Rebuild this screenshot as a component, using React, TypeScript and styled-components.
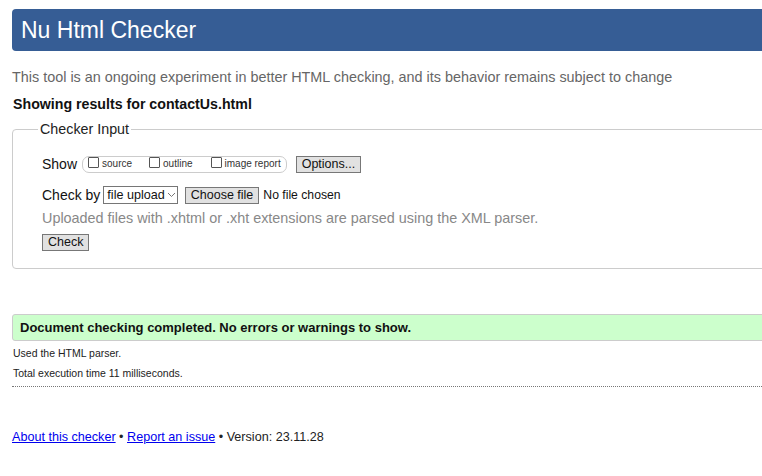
import styled, { createGlobalStyle } from "styled-components";

const GlobalStyle = createGlobalStyle`
  html, body {
    margin: 0;
    padding: 0;
    background: #fff;
    overflow: hidden;
  }
  body {
    font-family: "Liberation Sans", Arial, sans-serif;
    color: #111;
  }
`;

const Page = styled.div`
  width: 820px;
  padding: 9px 0 0 12px;
`;

const Header = styled.h1`
  margin: 0;
  height: 42px;
  background: #365d95;
  border-radius: 4px;
  color: #fff;
  font-size: 23px;
  font-weight: normal;
  line-height: 42px;
  padding-left: 9px;
`;

const Tagline = styled.p`
  margin: 17px 0 0;
  font-size: 14.4px;
  line-height: 18px;
  color: #666;
`;

const ResultsFor = styled.p`
  margin: 9px 0 0 1px;
  font-size: 14.2px;
  font-weight: bold;
  line-height: 18px;
`;

const Fieldset = styled.fieldset`
  margin: 8px 0 0;
  padding: 0 0 17px;
  border: 1px solid #ccc;
  border-radius: 4px;
  min-width: 0;
`;

const Legend = styled.legend`
  margin-left: 25px;
  padding: 0 2px;
  font-size: 14.3px;
  color: #222;
`;

const Inner = styled.div`
  padding: 9px 0 0 29px;
`;

const Row = styled.div<{ $top?: number }>`
  display: flex;
  align-items: center;
  margin-top: ${(p) => p.$top ?? 0}px;
  font-size: 14px;
  line-height: 18px;
`;

const Label = styled.span`
  margin-right: 3px;
`;

const ShowGroup = styled.span`
  display: inline-flex;
  align-items: center;
  height: 15px;
  border: 1px solid #ccc;
  border-radius: 7px;
  padding: 0 5px;
  margin-left: 2px;
`;

const CheckItem = styled.span<{ $gap?: number }>`
  display: inline-flex;
  align-items: center;
  margin-right: ${(p) => p.$gap ?? 0}px;
  font-size: 10px;
  color: #333;
`;

const Box = styled.span`
  box-sizing: border-box;
  display: inline-block;
  width: 11px;
  height: 11px;
  border: 1px solid #555;
  border-radius: 1px;
  margin-right: 3px;
  margin-top: -3px;
  background: #fff;
`;

const Button = styled.span<{ $ml?: number }>`
  display: inline-block;
  margin-left: ${(p) => p.$ml ?? 0}px;
  padding: 0 5px;
  height: 15px;
  line-height: 15px;
  font-size: 12.5px;
  color: #111;
  background: #e1e1e1;
  border: 1px solid #777;
`;

const Select = styled.span`
  display: inline-flex;
  align-items: center;
  height: 16px;
  padding: 0 1px 0 3px;
  border: 1px solid #767676;
  font-size: 12.6px;
  background: #fff;
`;

const Chevron = styled.svg`
  margin-left: 2px;
`;

const NoFile = styled.span`
  margin-left: 4px;
  font-size: 12.2px;
`;

const Hint = styled.p`
  margin: 5px 0 0;
  font-size: 14.4px;
  line-height: 18px;
  color: #888;
`;

const Success = styled.div`
  margin-top: 45px;
  height: 25px;
  line-height: 25px;
  background: #ccffcc;
  border: 1px solid #ccc;
  border-radius: 3px;
  padding-left: 7px;
  font-size: 13px;
  font-weight: bold;
`;

const Note = styled.p<{ $top: number }>`
  margin: ${(p) => p.$top}px 0 0 1px;
  font-size: 10.5px;
  line-height: 14px;
  color: #222;
`;

const Dotted = styled.hr`
  margin: 6px 0 0;
  border: 0;
  border-top: 1px dotted #777;
`;

const Footer = styled.p`
  margin: 41px 0 0;
  font-size: 12.6px;
  line-height: 18px;
  color: #222;
`;

const Link = styled.a`
  color: #0000ee;
  text-decoration: underline;
`;

export default function App() {
  return (
    <>
      <GlobalStyle />
      <Page>
        <Header>Nu Html Checker</Header>
        <Tagline>
          This tool is an ongoing experiment in better HTML checking, and its behavior remains subject to change
        </Tagline>
        <ResultsFor>Showing results for contactUs.html</ResultsFor>
        <Fieldset>
          <Legend>Checker Input</Legend>
          <Inner>
            <Row $top={9}>
              <Label>Show</Label>
              <ShowGroup>
                <CheckItem $gap={17}>
                  <Box />
                  source
                </CheckItem>
                <CheckItem $gap={18}>
                  <Box />
                  outline
                </CheckItem>
                <CheckItem>
                  <Box />
                  image report
                </CheckItem>
              </ShowGroup>
              <Button $ml={9}>Options...</Button>
            </Row>
            <Row $top={13}>
              <Label>Check by</Label>
              <Select>
                file upload
                <Chevron width="9" height="6" viewBox="0 0 9 6">
                  <path d="M1 1l3.5 3.5L8 1" fill="none" stroke="#777" strokeWidth="1" />
                </Chevron>
              </Select>
              <Button $ml={7}>Choose file</Button>
              <NoFile>No file chosen</NoFile>
            </Row>
            <Hint>Uploaded files with .xhtml or .xht extensions are parsed using the XML parser.</Hint>
            <Row $top={7}>
              <Button>Check</Button>
            </Row>
          </Inner>
        </Fieldset>
        <Success>Document checking completed. No errors or warnings to show.</Success>
        <Note $top={5}>Used the HTML parser.</Note>
        <Note $top={6}>Total execution time 11 milliseconds.</Note>
        <Dotted />
        <Footer>
          <Link href="#">About this checker</Link> • <Link href="#">Report an issue</Link> • Version: 23.11.28
        </Footer>
      </Page>
    </>
  );
}
